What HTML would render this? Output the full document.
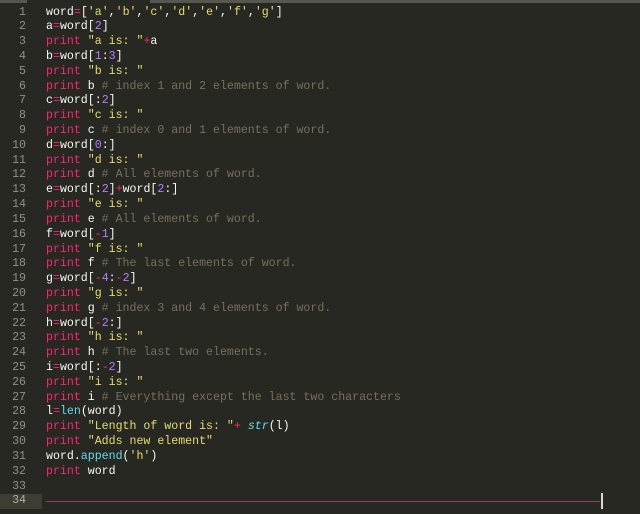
<!DOCTYPE html>
<html><head><meta charset="utf-8"><style>
html,body{margin:0;width:640px;height:514px;overflow:hidden;}
body{background:#272822;position:relative;font-family:"Liberation Mono",monospace;font-size:11.6px;}
.top{position:absolute;top:0;left:0;width:640px;height:3px;background:#56574f;}
.tab{position:absolute;top:0;left:27px;width:123px;height:3px;background:#272822;}
.g{position:absolute;left:0;width:42px;text-align:right;color:#8f908a;}
.g span{display:block;height:14.82px;line-height:14.82px;padding-right:16px;}
.g span.h{background:#3e3d32;color:#b0b0a8;}
.c{position:absolute;left:46px;top:5.5px;color:#f8f8f2;}
.c div{height:14.82px;line-height:14.82px;white-space:pre;}
.k{color:#f92672}.s{color:#e6db74}.n{color:#ae81ff}.m{color:#75715e}.f{color:#66d9ef}.i{color:#66d9ef;font-style:italic}
.dash{position:absolute;left:46px;top:501px;width:554px;height:1px;background:repeating-linear-gradient(90deg,#b03060 0 5px,#6a5a60 5px 8px);}
.cur{position:absolute;left:601px;top:493px;width:2px;height:16px;background:#d8d8d0;}
</style></head><body>
<div class="top"></div><div class="tab"></div>
<div class="g" style="top:5.5px"><span>1</span><span>2</span><span>3</span><span>4</span><span>5</span><span>6</span><span>7</span><span>8</span><span>9</span><span>10</span><span>11</span><span>12</span><span>13</span><span>14</span><span>15</span><span>16</span><span>17</span><span>18</span><span>19</span><span>20</span><span>21</span><span>22</span><span>23</span><span>24</span><span>25</span><span>26</span><span>27</span><span>28</span><span>29</span><span>30</span><span>31</span><span>32</span><span>33</span><span class="h">34</span></div>
<div class="c"><div>word<span class="k">=</span>[<span class="s">'a'</span>,<span class="s">'b'</span>,<span class="s">'c'</span>,<span class="s">'d'</span>,<span class="s">'e'</span>,<span class="s">'f'</span>,<span class="s">'g'</span>]</div><div>a<span class="k">=</span>word[<span class="n">2</span>]</div><div><span class="k">print</span> <span class="s">"a is: "</span><span class="k">+</span>a</div><div>b<span class="k">=</span>word[<span class="n">1</span>:<span class="n">3</span>]</div><div><span class="k">print</span> <span class="s">"b is: "</span></div><div><span class="k">print</span> b <span class="m"># index 1 and 2 elements of word.</span></div><div>c<span class="k">=</span>word[:<span class="n">2</span>]</div><div><span class="k">print</span> <span class="s">"c is: "</span></div><div><span class="k">print</span> c <span class="m"># index 0 and 1 elements of word.</span></div><div>d<span class="k">=</span>word[<span class="n">0</span>:]</div><div><span class="k">print</span> <span class="s">"d is: "</span></div><div><span class="k">print</span> d <span class="m"># All elements of word.</span></div><div>e<span class="k">=</span>word[:<span class="n">2</span>]<span class="k">+</span>word[<span class="n">2</span>:]</div><div><span class="k">print</span> <span class="s">"e is: "</span></div><div><span class="k">print</span> e <span class="m"># All elements of word.</span></div><div>f<span class="k">=</span>word[<span class="k">-</span><span class="n">1</span>]</div><div><span class="k">print</span> <span class="s">"f is: "</span></div><div><span class="k">print</span> f <span class="m"># The last elements of word.</span></div><div>g<span class="k">=</span>word[<span class="k">-</span><span class="n">4</span>:<span class="k">-</span><span class="n">2</span>]</div><div><span class="k">print</span> <span class="s">"g is: "</span></div><div><span class="k">print</span> g <span class="m"># index 3 and 4 elements of word.</span></div><div>h<span class="k">=</span>word[<span class="k">-</span><span class="n">2</span>:]</div><div><span class="k">print</span> <span class="s">"h is: "</span></div><div><span class="k">print</span> h <span class="m"># The last two elements.</span></div><div>i<span class="k">=</span>word[:<span class="k">-</span><span class="n">2</span>]</div><div><span class="k">print</span> <span class="s">"i is: "</span></div><div><span class="k">print</span> i <span class="m"># Everything except the last two characters</span></div><div>l<span class="k">=</span><span class="f">len</span>(word)</div><div><span class="k">print</span> <span class="s">"Length of word is: "</span><span class="k">+</span> <span class="i">str</span>(l)</div><div><span class="k">print</span> <span class="s">"Adds new element"</span></div><div>word.<span class="f">append</span>(<span class="s">'h'</span>)</div><div><span class="k">print</span> word</div></div>
<div class="dash"></div><div class="cur"></div>
</body></html>
